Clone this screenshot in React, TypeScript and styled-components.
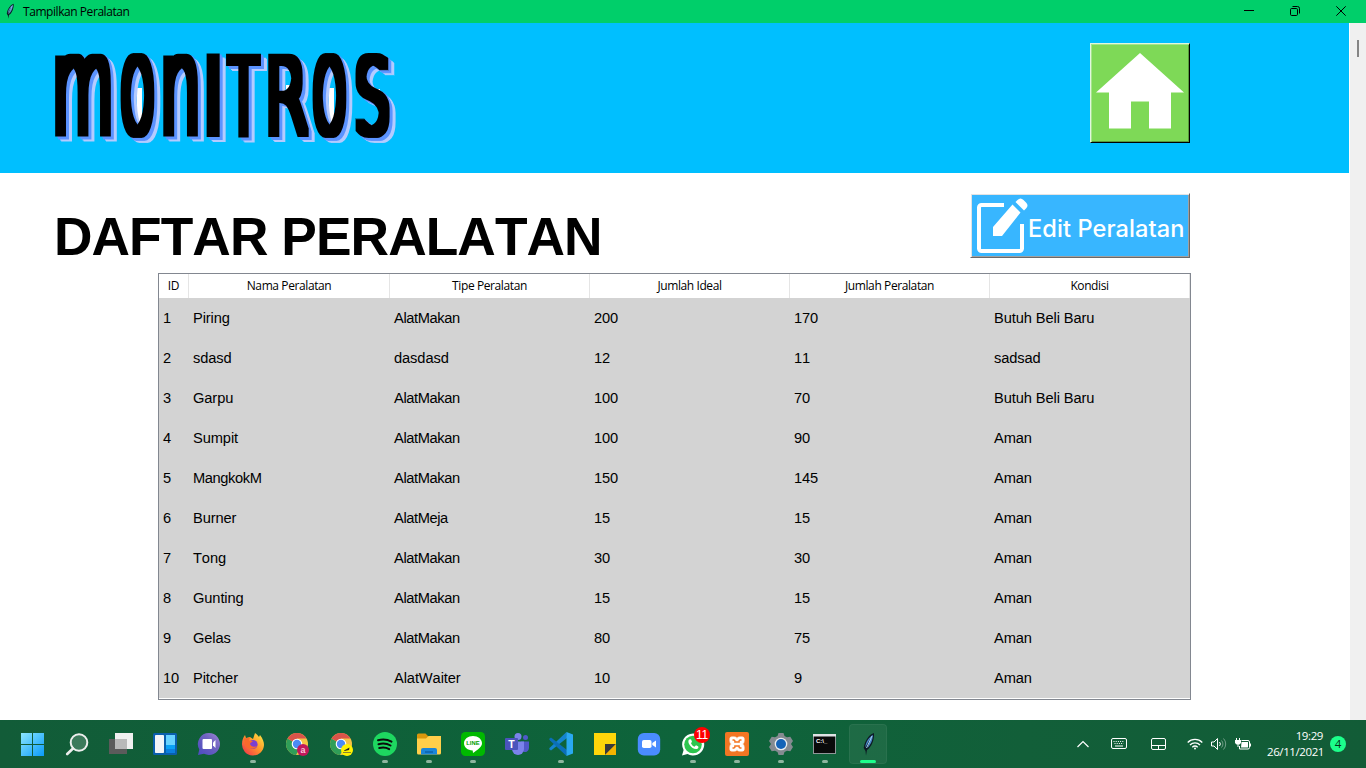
import React from "react";
import styled, { createGlobalStyle } from "styled-components";

const ui = `"Open Sans", "Noto Sans", sans-serif`;

const GlobalStyle = createGlobalStyle`
  * { box-sizing: border-box; }
  body { margin: 0; background: #fff; overflow: hidden; }
`;

const Screen = styled.div`
  width: 1366px;
  height: 768px;
  display: flex;
  flex-direction: column;
  background: #fff;
  color: #000;
  font-family: "Liberation Sans", Arial, sans-serif;
`;

const TitleBar = styled.header`
  height: 23px;
  flex: none;
  display: flex;
  align-items: center;
  padding: 0 2px 1px 4px;
  background: #00cf6a;
`;

const WindowTitle = styled.span`
  flex: 1;
  margin: 1px 0 0 7px;
  font: 12px/22px ${ui};
  letter-spacing: -0.44px;
`;

const WindowButton = styled.span`
  width: 46px;
  height: 20px;
  display: flex;
  align-items: center;
  justify-content: center;
`;

const WindowBody = styled.div`
  flex: 1;
  min-height: 0;
  display: flex;
`;

const Page = styled.main`
  width: 1349px;
  margin-right: 1px;
  display: flex;
  flex-direction: column;
`;

const ScrollTrack = styled.div`
  flex: 1;
  padding: 17px 0 0 7px;
  background: #f0f0f0;
`;

const ScrollThumb = styled.div`
  width: 2px;
  height: 17px;
  background: #858585;
`;

const Banner = styled.div`
  height: 150px;
  flex: none;
  display: flex;
  justify-content: space-between;
  align-items: flex-start;
  padding: 20px 159px 0 45px;
  background: #00bfff;
`;

const HomeButton = styled.button`
  width: 100px;
  height: 100px;
  padding: 0;
  border: 1px solid;
  border-color: #e2f7dc #000 #000 #e2f7dc;
  box-shadow: inset 1px 1px #a4e58b, inset -1px -1px #569a3d;
  background: #7ed957;
`;

const Heading = styled.div`
  height: 100px;
  flex: none;
  display: flex;
  justify-content: space-between;
  align-items: flex-start;
  padding: 20px 159px 0 54px;
`;

const Title = styled.h1`
  margin: 14px 0 0;
  font-size: 53.3px;
  line-height: 60px;
  font-weight: 700;
  font-kerning: none;
  letter-spacing: -0.93px;
  white-space: nowrap;
`;

const EditButton = styled.button`
  width: 220px;
  height: 65px;
  padding: 0 0 0 5px;
  display: flex;
  align-items: center;
  border: 1px solid;
  border-color: #fff #696969 #696969 #fff;
  box-shadow: inset 1px 1px #e3e3e3, inset -1px -1px #a0a0a0;
  background: #38b6ff;
  color: #fff;
`;

const EditLabel = styled.span`
  margin: 6px 0 0 0;
  font: 500 23.6px/30px Inter, sans-serif;
  letter-spacing: 0.08px;
  white-space: nowrap;
`;

const Table = styled.div`
  width: 1033px;
  margin-left: 158px;
  border: 1px solid #828790;
  padding-bottom: 1px;
`;

const TableRow = styled.div<{ $head?: boolean }>`
  display: grid;
  grid-template-columns: 30px 201px repeat(4, 200px);
  height: ${(p) => (p.$head ? 24 : 40)}px;
  background: ${(p) => (p.$head ? "#fff" : "#d3d3d3")};
`;

const HeadCell = styled.div`
  border-right: 1px solid #e5e5e5;
  text-align: center;
  font: 12px/24px ${ui};
  letter-spacing: -0.4px;
`;

const Cell = styled.div<{ $tight?: boolean }>`
  padding-left: 4px;
  font-size: 14.67px;
  line-height: 40px;
  letter-spacing: ${(p) => (p.$tight ? -0.4 : -0.1)}px;
  font-kerning: none;
  white-space: nowrap;
`;

const Taskbar = styled.footer`
  height: 48px;
  flex: none;
  display: flex;
  padding-left: 11px;
  background: linear-gradient(90deg, #125c38, #0f6039 25%, #0e643b 50%, #125f39 75%, #125c37);
`;

const TaskItem = styled.div<{ $active?: boolean }>`
  position: relative;
  width: ${(p) => (p.$active ? 38 : 44)}px;
  height: ${(p) => (p.$active ? 40 : 48)}px;
  margin: ${(p) => (p.$active ? "4px 0 0 2px" : "0")};
  display: flex;
  align-items: center;
  justify-content: center;
  border-radius: 4px;
  background: ${(p) => (p.$active ? "rgba(255,255,255,0.06)" : "none")};
  box-shadow: ${(p) => (p.$active ? "inset 0 0 0 1px rgba(255,255,255,.05)" : "none")};
`;

const RunMark = styled.i<{ $active?: boolean }>`
  position: absolute;
  left: 50%;
  bottom: ${(p) => (p.$active ? 1 : 5)}px;
  width: ${(p) => (p.$active ? 16 : 6)}px;
  height: 3px;
  margin-left: ${(p) => (p.$active ? -8 : -3)}px;
  border-radius: 2px;
  background: ${(p) => (p.$active ? "#1cff8b" : "#8db69f")};
`;

const Badge = styled.span`
  position: absolute;
  top: 7px;
  right: 5px;
  width: 16px;
  height: 16px;
  border-radius: 8px;
  background: #f00;
  color: #fff;
  text-align: center;
  font: 12px/16px "Liberation Sans", sans-serif;
  letter-spacing: -0.3px;
`;

const Tray = styled.div`
  margin-left: auto;
  display: flex;
  align-items: center;
  padding-right: 20px;
  color: #fff;
`;

const TrayIcon = styled.span<{ $w: number; $gap: number }>`
  width: ${(p) => p.$w}px;
  margin-right: ${(p) => p.$gap}px;
  display: flex;
`;

const Clock = styled.div`
  width: 56px;
  margin-right: 7px;
  text-align: right;
  font: 11.5px/16px ${ui};
  letter-spacing: -0.4px;
  white-space: nowrap;
`;

const Count = styled.span`
  width: 16px;
  height: 16px;
  border-radius: 8px;
  background: #1cff8b;
  color: #06331c;
  text-align: center;
  font: 11.5px/16px ${ui};
`;

type Glyph = { ch: string; x: number; w: number; ink: [number, number]; cap: number; lower?: boolean };

/* Wordmark letters: left edge, drawn width, natural ink box of the glyph in em units. */
const wordmark: Glyph[] = [
  { ch: "M", x: 10, w: 56, ink: [0.11, 0.87], cap: 0.56, lower: true },
  { ch: "O", x: 75, w: 35, ink: [0.066, 0.721], cap: 0.743 },
  { ch: "N", x: 118, w: 35, ink: [0.11, 0.53], cap: 0.56, lower: true },
  { ch: "I", x: 162, w: 12, ink: [0.125, 0.17], cap: 0.729 },
  { ch: "T", x: 180, w: 37, ink: [0, 0.61], cap: 0.729 },
  { ch: "R", x: 223, w: 42, ink: [0.12, 0.66], cap: 0.729 },
  { ch: "O", x: 267, w: 35, ink: [0.066, 0.721], cap: 0.743 },
  { ch: "S", x: 310, w: 35, ink: [0.08, 0.56], cap: 0.743 },
];

const Letter = styled.text<{ $lower?: boolean }>`
  font: 200 100px "DejaVu Sans", sans-serif;
  text-transform: ${(p) => (p.$lower ? "lowercase" : "none")};
`;

const WordmarkSvg = styled.svg`
  flex: none;
  overflow: visible;
`;

const Wordmark = () => (
  <WordmarkSvg width="360" height="110" viewBox="0 0 360 110" aria-label="MONITROS">
    <defs>
      <filter id="extrude" x="0" y="0" width="360" height="126" filterUnits="userSpaceOnUse" colorInterpolationFilters="sRGB">
        <feMorphology in="SourceAlpha" operator="dilate" radius="4 4" result="face" />
        <feOffset in="face" dx="2" dy="1" result="near1" />
        <feOffset in="face" dx="3" dy="3" result="near2" />
        <feMerge result="near"><feMergeNode in="near1" /><feMergeNode in="near2" /></feMerge>
        <feOffset in="face" dx="5" dy="4" result="far1" />
        <feOffset in="face" dx="6" dy="5" result="far2" />
        <feMerge result="far"><feMergeNode in="far1" /><feMergeNode in="far2" /></feMerge>
        <feFlood floodColor="#5b93ff" />
        <feComposite in2="near" operator="in" result="blue" />
        <feFlood floodColor="#b4cbff" />
        <feComposite in2="far" operator="in" result="pale" />
        <feMerge>
          <feMergeNode in="pale" />
          <feMergeNode in="blue" />
          <feMergeNode in="face" />
        </feMerge>
      </filter>
    </defs>
    <path d="M92 45h5v40h-5zM241 42h5v18h-5zM284 45h5v40h-5zM329 46h6v12h-6z" fill="#fff" />
    <g filter="url(#extrude)">
      {wordmark.map((l, i) => {
        const sx = l.ch === "I" ? 1 : (l.w - 8) / ((l.ink[1] - l.ink[0]) * 100);
        const sy = 75 / (l.cap * 100);
        return (
          <Letter
            key={i}
            $lower={l.lower}
            transform={`translate(${l.x + 4 - l.ink[0] * 100 * sx} 90) scale(${sx} ${sy})`}
          >
            {l.ch}
          </Letter>
        );
      })}
    </g>
  </WordmarkSvg>
);

const Feather = ({ w, h }: { w: number; h: number }) => (
  <svg width={w} height={h} viewBox="0 0 12 24">
    <path d="M11.500 1C7 2 2 9 1.200 16L3 19 3.500 23.500 4.500 18C9 15 12 8 11.500 1z" fill="#0c1a24" />
    <path d="M10.300 2.800C7 5 3 10 2.800 15.500L8 6 5 16C8 13 10.500 8 10.300 2.800z" fill="#4a86c8" />
    <path d="M9.500 4 4 16" stroke="#a8d0ef" strokeWidth="1" />
  </svg>
);

const Chrome = ({ children }: { children: React.ReactNode }) => (
  <svg width="24" height="24" viewBox="0 0 24 24">
    <circle cx="12" cy="12" r="11" fill="#f6c344" />
    <path d="M12 12 2.500 6.500A11 11 0 0 0 11 23l5-9z" fill="#2f9e58" />
    <path d="M12 12 2.500 6.500A11 11 0 0 1 21.500 6.500H12z" fill="#d9544a" />
    <circle cx="12" cy="12" r="5.300" fill="#fff" />
    <circle cx="12" cy="12" r="4.200" fill="#4c8bf5" />
    {children}
  </svg>
);

const Ico = ({ children }: { children: React.ReactNode }) => (
  <svg width="24" height="24" viewBox="0 0 24 24" fill="none">{children}</svg>
);

const SvgText = styled.text`
  font-family: "Liberation Sans", sans-serif;
  font-weight: 700;
`;

type Task = { name: string; icon: React.ReactNode; running?: boolean; badge?: string; active?: boolean };

const tasks: Task[] = [
  { name: "start", icon: (
    <Ico>
      <defs><linearGradient id="win" x1="0" y1="0" x2="1" y2="1"><stop stopColor="#8be6ff" /><stop offset="1" stopColor="#0a9bf8" /></linearGradient></defs>
      <path d="M0 1h11v11H0zM12 1h11v11H12zM0 13h11v11H0zM12 13h11v11H12z" fill="url(#win)" />
    </Ico>) },
  { name: "search", icon: (
    <Ico>
      <circle cx="14" cy="10.500" r="8.300" fill="#fff" fillOpacity=".18" stroke="#eceeed" strokeWidth="2" />
      <path d="M8 16.500 2.200 22" stroke="#eceeed" strokeWidth="2.600" strokeLinecap="round" />
    </Ico>) },
  { name: "task view", icon: (
    <Ico>
      <path d="M6 1h18v16H6z" fill="#f0f0f0" />
      <path d="M0 7h18v15H0z" fill="#5b5b5b" />
      <path d="M6 7h12v10H6z" fill="#b9b9b9" />
    </Ico>) },
  { name: "widgets", icon: (
    <Ico>
      <rect y="1" width="24" height="22" rx="1.500" fill="#0a5fad" />
      <rect x="2" y="3" width="9" height="18" rx=".8" fill="#f2f5f8" />
      <path d="M13 3h9v10h-9z" fill="#68d3ff" /><path d="M13 13h9v4h-9z" fill="#0aa2f6" /><path d="M13 17h9v4h-9z" fill="#0b80e0" />
    </Ico>) },
  { name: "chat", icon: (
    <Ico>
      <defs><linearGradient id="chat" x1="0" y1="1" x2="1" y2="0"><stop stopColor="#4a4bc0" /><stop offset=".6" stopColor="#6f62c0" /><stop offset="1" stopColor="#a08ad8" /></linearGradient></defs>
      <path d="M12 1a11 11 0 1 1-5 20.800L1 23l1.300-5.600A11 11 0 0 1 12 1z" fill="url(#chat)" />
      <rect x="5.500" y="7" width="9.500" height="10" rx="1" fill="#fff" /><path d="M16 10.500 18.500 8v8L16 13.500z" fill="#fff" />
    </Ico>) },
  { name: "firefox", running: true, icon: (
    <Ico>
      <defs><linearGradient id="fox" x1="1" y1="0" x2="0" y2="1"><stop stopColor="#fff04a" /><stop offset=".45" stopColor="#ff9a2a" /><stop offset="1" stopColor="#f0274f" /></linearGradient></defs>
      <path d="M1 12C1 8 2 6 4 3l1 3 4-1 3 2 2-6c2 1 3 3 4 4l1-2c3 4 4 7 4 10a11 11 0 0 1-22-1z" fill="url(#fox)" />
      <circle cx="12" cy="12.500" r="4.600" fill="#7b3fd0" /><path d="M3 6.500l6-1-1 3 4 .5-3 2.500c0 3 4 4 7 2.500-2 4-10 4-12-1.500z" fill="#fa6a2c" />
    </Ico>) },
  { name: "chrome a", icon: (
    <Chrome><circle cx="18" cy="18" r="6" fill="#c2185b" /><SvgText x="15.500" y="20.800" fontSize="9" fill="#f5c6da">a</SvgText></Chrome>) },
  { name: "chrome b", icon: (
    <Chrome><circle cx="18" cy="18" r="6" fill="#fff200" /><path d="M15 18.500 20.500 15.500 20 18 15.500 19z" fill="#222" /><path d="M14 20.500h8" stroke="#8a8430" /></Chrome>) },
  { name: "spotify", running: true, icon: (
    <Ico>
      <circle cx="12" cy="12" r="12" fill="#1ed760" />
      <path d="M5 8.200c4.500-1.200 9.500-.8 13.500 1.400M5.500 12.200c4-1 8.500-.7 12 1.300M6.200 16c3.300-.8 7-.6 10 1.100" stroke="#0b0b0b" strokeWidth="2" strokeLinecap="round" />
    </Ico>) },
  { name: "explorer", running: true, icon: (
    <Ico>
      <path d="M0 3a1.500 1.500 0 0 1 1.500-1.500h7L11 4v4H0z" fill="#d9970c" />
      <path d="M0 6.500h9L11.500 4H24v17a1.500 1.500 0 0 1-1.500 1.500h-21A1.500 1.500 0 0 1 0 21z" fill="#ffcf4a" />
      <path d="M4 22.500V18a2 2 0 0 1 2-2h12a2 2 0 0 1 2 2v4.500z" fill="#1a86d8" /><path d="M8 20h8" stroke="#0c61a8" strokeWidth="1.500" />
    </Ico>) },
  { name: "line", running: true, icon: (
    <Ico>
      <rect width="24" height="24" rx="4.500" fill="#00b900" />
      <path d="M12 4c5 0 9 3.200 9 7.300 0 4-5 7-9 9.700l-.3-2.500C6.500 18.300 3 15.300 3 11.300 3 7.200 7 4 12 4z" fill="#fff" />
      <SvgText x="5.300" y="13.400" fontSize="5.800" fill="#00a000">LINE</SvgText>
    </Ico>) },
  { name: "teams", icon: (
    <Ico>
      <circle cx="13" cy="4.500" r="3.500" fill="#7b83eb" /><circle cx="20.500" cy="5.500" r="2.500" fill="#5059c9" />
      <path d="M16 9.500h8V16a4 4 0 0 1-6 3.500z" fill="#5059c9" />
      <path d="M7 9.500h12V17a6 6 0 0 1-12 0z" fill="#7b83eb" />
      <rect y="6" width="13" height="12" rx="1" fill="#4b53bc" /><SvgText x="3.200" y="15.500" fontSize="10.500" fill="#fff">T</SvgText>
    </Ico>) },
  { name: "code", running: true, icon: (
    <Ico>
      <path d="M17.500 0 1 15.500 0 17l2 1.500L18 6z" fill="#1484cf" /><path d="M17.500 24 1 8.500 0 7l2-1.500L18 18z" fill="#0b6fb8" />
      <path d="M17.500 0 24 2.500v19L17.500 24z" fill="#2aa9f2" />
    </Ico>) },
  { name: "notes", icon: (
    <Ico><path d="M1 1h22v11L12 23H1z" fill="#ffd60a" /><path d="M12 12h11L12 23z" fill="#3a3a3a" /><path d="M23 12v11H12z" fill="#f4b400" /></Ico>) },
  { name: "zoom", icon: (
    <Ico>
      <rect x=".8" y="1" width="22.400" height="22.400" rx="6" fill="#4a8cff" />
      <rect x="5" y="8" width="9.500" height="8" rx="1.800" fill="#fff" /><path d="M15.300 11 19 8.500v7L15.300 13z" fill="#fff" />
    </Ico>) },
  { name: "whatsapp", running: true, badge: "11", icon: (
    <Ico>
      <path d="M12 1.500A11 11 0 0 0 2.600 18L1 23.500l5.500-1.600A11 11 0 1 0 12 1.500z" fill="#fff" />
      <circle cx="12" cy="12.500" r="8.800" fill="#2cc64f" />
      <path d="M8 7.500c-2.500 3 3 10.500 8 9.500 2-.8 1.500-2.500 1-2.800l-2-1-1.500 1.500c-1.500-.5-3-2-3.500-3.500l1-1.500-1-2.400z" fill="#fff" />
    </Ico>) },
  { name: "xampp", running: true, icon: (
    <Ico>
      <rect width="24" height="24" rx="2" fill="#f37623" />
      <path d="M5 6.500Q5 5 6.500 5H9.500Q11.500 5 12 6.500Q12.500 5 14.500 5H17.500Q19 5 19 6.500V9Q19 11 17.500 12Q19 13 19 15V17.500Q19 19 17.500 19H14.500Q12.500 19 12 17.500Q11.500 19 9.500 19H6.500Q5 19 5 17.500V15Q5 13 6.500 12Q5 11 5 9z" fill="#fff" stroke="#fff" strokeWidth="1" />
      <path d="M7.500 8H9Q10 8 10 10H14Q14 8 15 8H16.500M7.500 16H9Q10 16 10 14H14Q14 16 15 16H16.500" stroke="#f37623" strokeWidth="1.600" />
    </Ico>) },
  { name: "settings", running: true, icon: (
    <Ico>
      <path d="m9.500 1 5 0 1 3 2.500 1.300 3.300-.5L24 9l-2 3 2 3-2.700 4.200-3.300-.5L15.500 20l-1 3h-5l-1-3L6 18.700l-3.300.5L0 15l2-3-2-3 2.700-4.200 3.300.5L8.500 4z" fill="#858b91" />
      <circle cx="12" cy="12" r="6.300" fill="#e9edf0" /><circle cx="12" cy="12" r="5" fill="#1464b8" />
    </Ico>) },
  { name: "terminal", running: true, icon: (
    <Ico>
      <rect x=".5" y="2.500" width="22" height="19" fill="#0a0a0a" stroke="#8f9698" /><path d="M0 2h23v2.500H0z" fill="#dfe3e4" />
      <SvgText x="3" y="11" fontSize="6" fill="#fff">C:\_</SvgText>
    </Ico>) },
  { name: "tk", active: true, icon: <Feather w={13} h={24} /> },
];

const columns = ["ID", "Nama Peralatan", "Tipe Peralatan", "Jumlah Ideal", "Jumlah Peralatan", "Kondisi"];

const rows = [
  ["1", "Piring", "AlatMakan", "200", "170", "Butuh Beli Baru"],
  ["2", "sdasd", "dasdasd", "12", "11", "sadsad"],
  ["3", "Garpu", "AlatMakan", "100", "70", "Butuh Beli Baru"],
  ["4", "Sumpit", "AlatMakan", "100", "90", "Aman"],
  ["5", "MangkokM", "AlatMakan", "150", "145", "Aman"],
  ["6", "Burner", "AlatMeja", "15", "15", "Aman"],
  ["7", "Tong", "AlatMakan", "30", "30", "Aman"],
  ["8", "Gunting", "AlatMakan", "15", "15", "Aman"],
  ["9", "Gelas", "AlatMakan", "80", "75", "Aman"],
  ["10", "Pitcher", "AlatWaiter", "10", "9", "Aman"],
];

export default function App() {
  return (
    <Screen>
      <GlobalStyle />
      <TitleBar>
        <Feather w={12} h={16} />
        <WindowTitle>Tampilkan Peralatan</WindowTitle>
        <WindowButton><svg width="10" height="10"><path d="M0 4.500h10" stroke="#000" /></svg></WindowButton>
        <WindowButton>
          <svg width="10" height="10" fill="none" stroke="#000"><rect x=".5" y="2.500" width="7" height="7" rx="1.200" /><path d="M2.500.5h5a2 2 0 0 1 2 2v5" /></svg>
        </WindowButton>
        <WindowButton><svg width="10" height="10"><path d="M.3.3l9.400 9.400M9.700.3.3 9.700" stroke="#000" /></svg></WindowButton>
      </TitleBar>
      <WindowBody>
        <Page>
          <Banner>
            <Wordmark />
            <HomeButton aria-label="Home">
              <svg width="98" height="98" viewBox="1 1 98 98" display="block">
                <path d="M50 10 94 49.500H81V85.500H59V58.500H41V85.500H19V49.500H6z" fill="#fff" />
              </svg>
            </HomeButton>
          </Banner>
          <Heading>
            <Title>DAFTAR PERALATAN</Title>
            <EditButton>
              <svg width="52" height="61" viewBox="0 0 52 61" fill="none">
                <path d="M28 10H5.500a2.500 2.500 0 0 0-2.500 2.500v41a2.500 2.500 0 0 0 2.500 2.500h38a2.500 2.500 0 0 0 2.500-2.500V29" stroke="#fff" strokeWidth="4" />
                <path d="M36.500 9.500 44.500 17.500 26 41H17V32zM39.500 7l2-2c2-2 4-2 6 0l2.500 2.500c2 2 2 4 0 6L48 15.500z" fill="#fff" />
              </svg>
              <EditLabel>Edit Peralatan</EditLabel>
            </EditButton>
          </Heading>
          <Table>
            <TableRow $head>
              {columns.map((c) => <HeadCell key={c}>{c}</HeadCell>)}
            </TableRow>
            {rows.map((r) => (
              <TableRow key={r[0]}>
                {r.map((v, i) => <Cell key={i} $tight={v.includes("M")}>{v}</Cell>)}
              </TableRow>
            ))}
          </Table>
        </Page>
        <ScrollTrack><ScrollThumb /></ScrollTrack>
      </WindowBody>
      <Taskbar>
        {tasks.map((t) => (
          <TaskItem key={t.name} $active={t.active}>
            {t.icon}
            {t.badge && <Badge>{t.badge}</Badge>}
            {(t.running || t.active) && <RunMark $active={t.active} />}
          </TaskItem>
        ))}
        <Tray>
          <TrayIcon $w={12} $gap={22}><svg width="12" height="8" fill="none" stroke="#fff" strokeWidth="1.200"><path d="M.5 7 6 1.500 11.500 7" /></svg></TrayIcon>
          <TrayIcon $w={16} $gap={24}>
            <svg width="16" height="12" fill="none" stroke="#fff"><rect x=".5" y=".5" width="15" height="10" rx="1.500" /><path d="M2.500 3.500h11M3.500 5.500h9" strokeDasharray="1 1.200" /><path d="M4 8h8" /></svg>
          </TrayIcon>
          <TrayIcon $w={15} $gap={21}>
            <svg width="15" height="12" fill="none" stroke="#fff"><rect x=".5" y=".5" width="14" height="11" rx="1.500" /><path d="M.5 7.500h14M7.500 7.500v4" /></svg>
          </TrayIcon>
          <TrayIcon $w={16} $gap={8}>
            <svg width="16" height="12" fill="none" stroke="#fff" strokeWidth="1.300"><path d="M.7 4.500a10.300 10.300 0 0 1 14.600 0M3 7a7 7 0 0 1 10 0M5.300 9.200a4 4 0 0 1 5.400 0" /><circle cx="8" cy="10.500" r="1" fill="#fff" stroke="none" /></svg>
          </TrayIcon>
          <TrayIcon $w={16} $gap={8}>
            <svg width="16" height="14" fill="none" stroke="#fff"><path d="M.5 5H3l3.500-3.500v11L3 9H.5z" /><path d="M8.500 5a3 3 0 0 1 0 4" /><path d="M10.500 3.500a5 5 0 0 1 0 7M12.500 1.500a8 8 0 0 1 0 11" opacity=".4" /></svg>
          </TrayIcon>
          <TrayIcon $w={17} $gap={15}>
            <svg width="17" height="13" fill="none" stroke="#fff"><path d="M6.500 2.500H13a1.500 1.500 0 0 1 1.500 1.500v5.500a1.500 1.500 0 0 1-1.500 1.500H4.500V8" /><path d="M6.500 4H13v5.500H6z" fill="#fff" stroke="none" /><path d="M15.500 5.500v3M1.500 0v2M4.500 0v2M3 6V9" /><path d="M0 2h6V5L4.500 6.500h-3L0 5z" fill="#fff" stroke="none" /></svg>
          </TrayIcon>
          <Clock>19:29<br />26/11/2021</Clock>
          <Count>4</Count>
        </Tray>
      </Taskbar>
    </Screen>
  );
}
